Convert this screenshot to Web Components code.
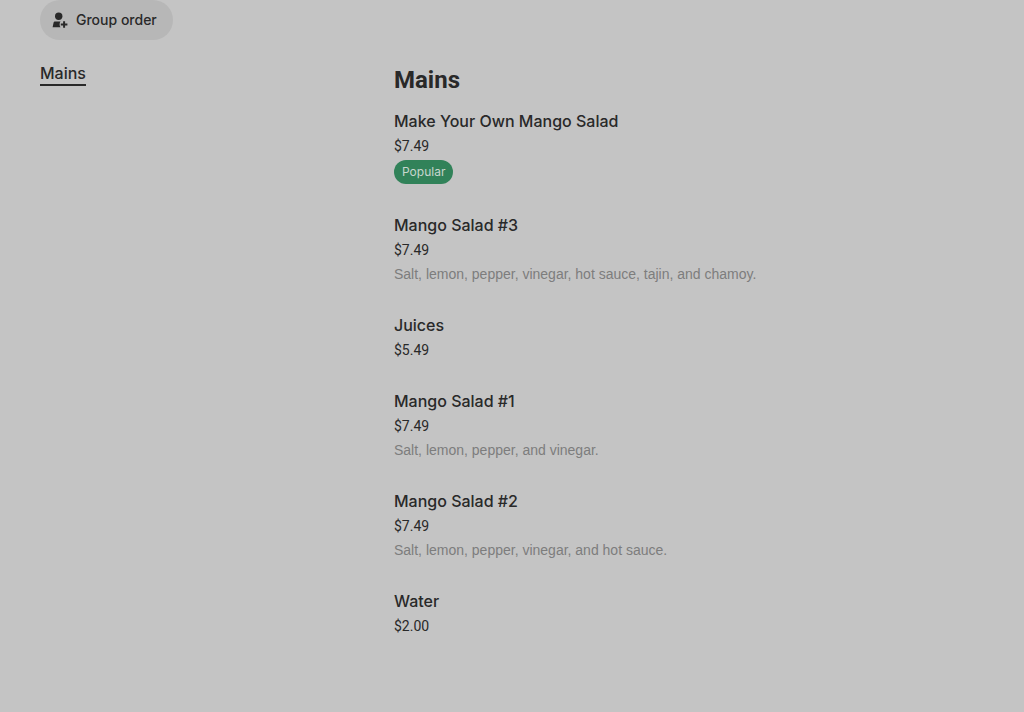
<!DOCTYPE html>
<html lang="en">
<head>
<meta charset="utf-8">
<meta name="viewport" content="width=device-width, initial-scale=1">
<title>Mains</title>
<style>
    body {
        margin: 0;
        background: #c4c4c4;
        color: #292929;
        font-family: Inter, "Liberation Sans", sans-serif;
    }
</style>
</head>
<body>
<store-menu>
    <group-order-button slot="actions">Group order</group-order-button>
    <category-link slot="nav" href="#mains">Mains</category-link>
    <menu-section id="mains" heading="Mains">
        <menu-item name="Make Your Own Mango Salad" price="$7.49" badge="Popular"></menu-item>
        <menu-item name="Mango Salad #3" price="$7.49">Salt, lemon, pepper, vinegar, hot sauce, tajin, and chamoy.</menu-item>
        <menu-item name="Juices" price="$5.49"></menu-item>
        <menu-item name="Mango Salad #1" price="$7.49">Salt, lemon, pepper, and vinegar.</menu-item>
        <menu-item name="Mango Salad #2" price="$7.49">Salt, lemon, pepper, vinegar, and hot sauce.</menu-item>
        <menu-item name="Water" price="$2.00"></menu-item>
    </menu-section>
</store-menu>

<script>
class StoreMenu extends HTMLElement {
    constructor() {
        super();
        this.attachShadow({ mode: "open" });
        this.shadowRoot.innerHTML = `
            <style>
                :host {
                    display: block;
                    padding: 0 40px;
                }

                header {
                    display: flex;
                }

                .columns {
                    display: grid;
                    grid-template-columns: 3fr 5fr;
                    padding-top: 24px;
                }

                nav {
                    display: flex;
                    flex-direction: column;
                    align-items: flex-start;
                }
            </style>
            <header><slot name="actions"></slot></header>
            <div class="columns">
                <nav aria-label="Menu categories"><slot name="nav"></slot></nav>
                <main><slot></slot></main>
            </div>
        `;
    }
}

class GroupOrderButton extends HTMLElement {
    constructor() {
        super();
        this.attachShadow({ mode: "open" });
        this.shadowRoot.innerHTML = `
            <style>
                :host {
                    display: inline-flex;
                }

                button {
                    display: flex;
                    align-items: center;
                    gap: 8px;
                    height: 40px;
                    padding: 0 16px 0 12px;
                    border: none;
                    border-radius: 20px;
                    background: #b7b7b7;
                    color: inherit;
                    font: 500 14px/20px Inter, "Liberation Sans", sans-serif;
                    cursor: pointer;
                }

                svg {
                    width: 16px;
                    height: 16px;
                    fill: #292929;
                }
            </style>
            <button type="button">
                <svg viewBox="0 0 16 16" aria-hidden="true">
                    <circle cx="6.7" cy="4.3" r="3.7"/>
                    <path d="M3.2 9.6h5.3c-.6.8-.9 1.8-.9 2.9 0 1.1.3 2 .9 2.8H.6l.9-4.3c.2-.9.8-1.4 1.7-1.4z"/>
                    <path d="M11.1 9.2h2v2.3h2.3v2h-2.3v2.3h-2v-2.3H8.8v-2h2.3z"/>
                </svg>
                <slot></slot>
            </button>
        `;
    }
}

class CategoryLink extends HTMLElement {
    constructor() {
        super();
        this.attachShadow({ mode: "open" });

        const href = this.getAttribute("href") || "#";

        this.shadowRoot.innerHTML = `
            <style>
                :host {
                    display: block;
                }

                a {
                    display: block;
                    padding-bottom: 2px;
                    border-bottom: 2px solid #292929;
                    color: inherit;
                    font-size: 16px;
                    font-weight: 500;
                    line-height: 18px;
                    text-decoration: none;
                }
            </style>
            <a href="${href}"><slot></slot></a>
        `;
    }
}

class MenuSection extends HTMLElement {
    constructor() {
        super();
        this.attachShadow({ mode: "open" });

        const heading = this.getAttribute("heading") || "";

        this.shadowRoot.innerHTML = `
            <style>
                :host {
                    display: block;
                }

                h2 {
                    margin: 0 0 13px;
                    font-family: Roboto, "Liberation Sans", sans-serif;
                    font-size: 24px;
                    font-weight: 700;
                    line-height: 32px;
                }

                .items {
                    display: flex;
                    flex-direction: column;
                    gap: 27px;
                }
            </style>
            <h2>${heading}</h2>
            <div class="items"><slot></slot></div>
        `;
    }
}

class MenuItem extends HTMLElement {
    constructor() {
        super();
        this.attachShadow({ mode: "open" });

        const name = this.getAttribute("name") || "";
        const price = this.getAttribute("price") || "";
        const badge = this.getAttribute("badge");
        const hasDescription = this.textContent.trim() !== "";

        this.shadowRoot.innerHTML = `
            <style>
                :host {
                    display: block;
                }

                h3, p {
                    margin: 0;
                    line-height: 24px;
                }

                h3 {
                    margin-bottom: 1px;
                    font-size: 16px;
                    font-weight: 500;
                }

                p {
                    font-family: Roboto, "Liberation Sans", sans-serif;
                    font-size: 14px;
                }

                .description {
                    color: #7d7d7d;
                    font-family: "Liberation Sans", sans-serif;
                }

                .badge {
                    display: block;
                    width: fit-content;
                    margin: 2px 0;
                    padding: 0 8px;
                    border-radius: 12px;
                    background: #318259;
                    color: #c8d6ce;
                    font-size: 12px;
                    line-height: 24px;
                }
            </style>
            <h3>${name}</h3>
            <p>${price}</p>
            ${hasDescription ? `<p class="description"><slot></slot></p>` : ""}
            ${badge ? `<span class="badge">${badge}</span>` : ""}
        `;
    }
}

customElements.define("store-menu", StoreMenu);
customElements.define("group-order-button", GroupOrderButton);
customElements.define("category-link", CategoryLink);
customElements.define("menu-section", MenuSection);
customElements.define("menu-item", MenuItem);
</script>
</body>
</html>
